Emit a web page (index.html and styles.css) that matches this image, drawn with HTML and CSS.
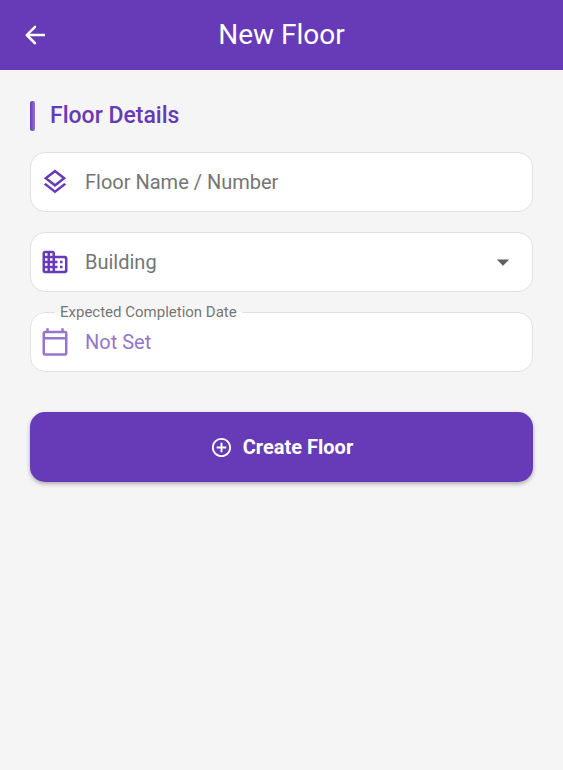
FILE: index.html
```html
<!DOCTYPE html>
<html lang="en">
<head>
  <meta charset="utf-8">
  <meta name="viewport" content="width=device-width, initial-scale=1">
  <title>New Floor</title>
  <link rel="stylesheet" href="styles.css">
</head>
<body>
  <header class="app-bar">
    <button class="back" type="button" aria-label="Back">
      <svg class="icon" viewBox="0 0 24 24" aria-hidden="true"><path d="M20 11H7.83l4.88-4.88c.39-.39.39-1.03 0-1.42a1 1 0 0 0-1.41 0L4.7 11.3a1 1 0 0 0 0 1.4l6.6 6.6a1 1 0 0 0 1.41-1.42L7.83 13H20v-2z"/></svg>
    </button>
    <h1 class="title">New Floor</h1>
  </header>

  <main class="content">
    <h2 class="section-title">Floor Details</h2>
    <form class="form">
      <div class="field">
        <svg class="icon" viewBox="0 0 24 24" aria-hidden="true"><path d="M11.99 18.54l-7.37-5.73L3 14.07l9 7 9-7-1.63-1.27-7.38 5.74zM12 16l7.36-5.73L21 9l-9-7-9 7 1.63 1.27L12 16zm0-11.47L17.74 9 12 13.47 6.26 9 12 4.53z"/></svg>
        <input class="control" type="text" placeholder="Floor Name / Number" aria-label="Floor Name / Number">
      </div>

      <div class="field">
        <svg class="icon" viewBox="0 0 24 24" aria-hidden="true"><path fill-rule="evenodd" d="M12 7V5c0-1.1-.9-2-2-2H4c-1.1 0-2 .9-2 2v14c0 1.1.9 2 2 2h16c1.1 0 2-.9 2-2V9c0-1.1-.9-2-2-2h-8zM6 19H4v-2h2v2zm0-4H4v-2h2v2zm0-4H4V9h2v2zm0-4H4V5h2v2zm4 12H8v-2h2v2zm0-4H8v-2h2v2zm0-4H8V9h2v2zm0-4H8V5h2v2zm9 12h-7v-2h2v-2h-2v-2h2v-2h-2V9h7c.55 0 1 .45 1 1v8c0 .55-.45 1-1 1z"/><path d="M16 11h2v2h-2zM16 15h2v2h-2z"/></svg>
        <select class="control" aria-label="Building">
          <option>Building</option>
        </select>
        <svg class="icon caret" viewBox="0 0 24 24" aria-hidden="true"><path d="M7 10l5 5 5-5z"/></svg>
      </div>

      <fieldset class="field-outline">
        <legend class="legend"><label for="completion">Expected Completion Date</label></legend>
        <div class="field-row">
          <svg class="icon" viewBox="0 0 24 24" aria-hidden="true"><path d="M20 3h-1V1h-2v2H7V1H5v2H4c-1.1 0-2 .9-2 2v16c0 1.1.9 2 2 2h16c1.1 0 2-.9 2-2V5c0-1.1-.9-2-2-2zm0 18H4V10h16v11zm0-13H4V5h16v3z"/></svg>
          <input class="control date" id="completion" type="text" value="Not Set" readonly>
        </div>
      </fieldset>

      <button class="submit" type="submit">
        <svg class="icon-small" viewBox="0 0 24 24" aria-hidden="true"><path d="M13 7h-2v4H7v2h4v4h2v-4h4v-2h-4V7zm-1-5C6.48 2 2 6.48 2 12s4.48 10 10 10 10-4.48 10-10S17.52 2 12 2zm0 18c-4.41 0-8-3.59-8-8s3.59-8 8-8 8 3.59 8 8-3.59 8-8 8z"/></svg>
        Create Floor
      </button>
    </form>
  </main>
</body>
</html>
```
FILE: styles.css
```css
:root {
  --primary: #673ab7;
  --primary-light: #9575cd;
  --surface: #ffffff;
  --page: #f5f5f5;
  --outline: #e0e0e0;
  --hint: #757575;
}

* {
  box-sizing: border-box;
}

body {
  margin: 0;
  background: var(--page);
  font-family: Roboto, "Liberation Sans", sans-serif;
  font-size: 20px;
}

button,
input,
select {
  font: inherit;
}

.icon {
  flex: none;
  width: 30px;
  height: 30px;
  fill: currentColor;
}

.app-bar {
  display: grid;
  grid-template-columns: 30px 1fr 30px;
  align-items: center;
  height: 70px;
  padding: 0 20px;
  background: var(--primary);
  color: #ffffff;
}

.back {
  display: flex;
  padding: 0;
  border: 0;
  background: none;
  color: inherit;
}

.title {
  margin: 0;
  padding-bottom: 2px;
  font-size: 28px;
  font-weight: 400;
  text-align: center;
}

.content {
  padding: 31px 30px;
}

.section-title {
  display: flex;
  align-items: center;
  gap: 15px;
  margin: 0 0 21px;
  color: var(--primary);
  font-size: 23px;
  font-weight: 500;
  line-height: 30px;
}

.section-title::before {
  content: "";
  width: 5px;
  height: 30px;
  border-radius: 2px;
  background: linear-gradient(to right, var(--primary), var(--primary-light));
}

.form {
  display: flex;
  flex-direction: column;
}

.field {
  display: flex;
  align-items: center;
  gap: 15px;
  height: 60px;
  margin-bottom: 20px;
  padding: 0 14px 0 9px;
  border: 1px solid var(--outline);
  border-radius: 15px;
  background: var(--surface);
  color: var(--primary);
}

.control {
  flex: 1;
  min-width: 0;
  padding: 0;
  border: 0;
  outline: 0;
  background: none;
  color: var(--hint);
  appearance: none;
}

.control::placeholder {
  color: var(--hint);
  opacity: 1;
}

.caret {
  color: #616161;
}

.field-outline {
  min-width: 0;
  margin: -9px 0 40px;
  padding: 0 14px 0 9px;
  border: 1px solid var(--outline);
  border-radius: 15px;
  background: var(--surface);
  color: var(--primary-light);
}

.legend {
  margin-left: 15px;
  padding: 0 5px;
  color: var(--hint);
  font-size: 15px;
  line-height: 18px;
}

.field-row {
  display: flex;
  align-items: center;
  gap: 15px;
  height: 50px;
  padding-bottom: 8px;
}

.date {
  color: var(--primary-light);
}

.submit {
  display: flex;
  align-items: center;
  justify-content: center;
  gap: 10px;
  height: 70px;
  padding: 0 20px;
  border: 0;
  border-radius: 15px;
  background: var(--primary);
  box-shadow: 0 2px 4px rgba(0, 0, 0, 0.3);
  color: #ffffff;
  font-weight: 700;
}

.icon-small {
  width: 23px;
  height: 23px;
  fill: currentColor;
}
```
